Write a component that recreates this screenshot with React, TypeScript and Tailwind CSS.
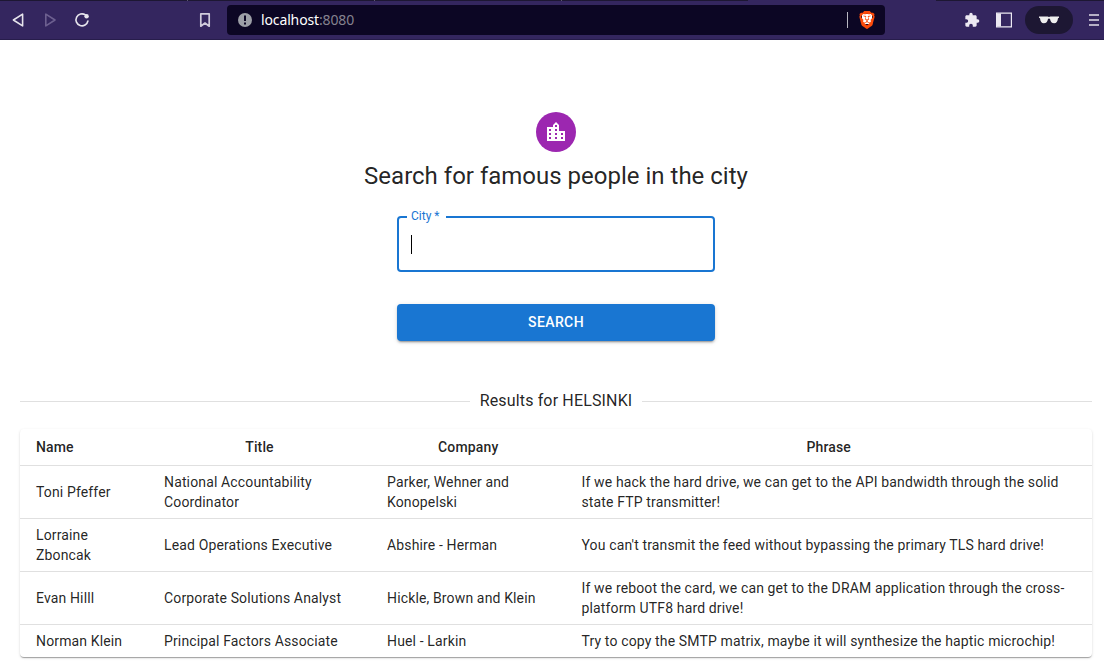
import React from 'react';
import { MdExtension, MdLocationCity } from 'react-icons/md';
import { SiBrave } from 'react-icons/si';

const people = [
  {
    name: 'Toni Pfeffer',
    title: 'National Accountability Coordinator',
    company: 'Parker, Wehner and Konopelski',
    phrase:
      'If we hack the hard drive, we can get to the API bandwidth through the solid state FTP transmitter!',
  },
  {
    name: 'Lorraine Zboncak',
    title: 'Lead Operations Executive',
    company: 'Abshire - Herman',
    phrase: "You can't transmit the feed without bypassing the primary TLS hard drive!",
  },
  {
    name: 'Evan Hilll',
    title: 'Corporate Solutions Analyst',
    company: 'Hickle, Brown and Klein',
    phrase:
      'If we reboot the card, we can get to the DRAM application through the cross-platform UTF8 hard drive!',
  },
  {
    name: 'Norman Klein',
    title: 'Principal Factors Associate',
    company: 'Huel - Larkin',
    phrase: 'Try to copy the SMTP matrix, maybe it will synthesize the haptic microchip!',
  },
];

function BrowserBar() {
  return (
    <header className="flex h-10 w-full shrink-0 flex-col overflow-hidden border-b border-[#271d4b] bg-[#34265f]">
      <div className="flex h-px w-full shrink-0 justify-between">
        <div className="flex h-px w-[748px] bg-[#1d1733]">
          <span className="ml-[187px] h-px w-px bg-[#5b5670]" />
          <span className="ml-[186px] h-px w-px bg-[#5b5670]" />
          <span className="ml-[186px] h-px w-px bg-[#5b5670]" />
        </div>
        <div className="h-px w-[168px] bg-[#1d1733]" />
      </div>
      <div className="flex flex-1 items-center">
        <svg className="ml-2.5 shrink-0" width="16" height="16" viewBox="0 0 16 16" fill="none" stroke="#e6e4ec" strokeWidth="1.6" strokeLinejoin="round">
          <path d="M12.6 2.1v11.8L3.4 8z" />
        </svg>
        <svg className="ml-4 shrink-0" width="16" height="16" viewBox="0 0 16 16" fill="none" stroke="#6d6090" strokeWidth="1.6" strokeLinejoin="round">
          <path d="M3.8 2.1v11.8L13 8z" />
        </svg>
        <svg className="ml-4 shrink-0" width="16" height="16" viewBox="0 0 16 16" fill="none" stroke="#e6e4ec" strokeWidth="1.6" strokeLinecap="round">
          <path d="M11.4 2.900A6 6 0 1 0 13.900 9" />
          <circle cx="12.6" cy="4.200" r="2.200" fill="#e6e4ec" stroke="none" />
        </svg>
        <svg className="ml-[107px] shrink-0" width="16" height="16" viewBox="0 0 16 16" fill="none" stroke="#d0ccdc" strokeWidth="1.7" strokeLinejoin="round">
          <path d="M3.8 1.800h8.400v12.400L8 11l-4.200 3.200z" />
        </svg>
        <div className="ml-[14px] flex h-[30px] w-[658px] shrink-0 items-center rounded bg-[#0c0624] pl-[11px]">
          <svg className="shrink-0" width="14" height="14" viewBox="0 0 14 14">
            <circle cx="7" cy="7" r="7" fill="#9d9fa7" />
            <path d="M6 2.500h2v5.500H6zM6 9.500h2v2H6z" fill="#0c0624" />
          </svg>
          <span className="ml-[9px] font-['Noto_Sans'] text-[14px] leading-5 tracking-[-0.13px] text-white">
            localhost<span className="text-[#85828f]">:8080</span>
          </span>
          <span className="ml-auto h-4 w-px bg-[#b9b7c2]" />
          <span className="relative mr-[9px] ml-[10px] flex h-[18px] w-[18px] items-center justify-center">
            <span className="absolute top-[3px] left-[4px] h-[10px] w-[10px] bg-white" />
            <SiBrave className="relative text-[#fb4a0a]" size={18} />
          </span>
        </div>
        <MdExtension className="ml-[79px] shrink-0 text-[#ece9f2]" size={16} />
        <svg className="ml-4 shrink-0" width="16" height="16" viewBox="0 0 16 16">
          <path d="M.6 1.100h14.800v13.800H.6z" fill="none" stroke="#ece9f2" strokeWidth="1.200" />
          <path d="M1 1.500h4v13H1z" fill="#ece9f2" />
        </svg>
        <div className="ml-[13px] flex h-7 w-12 shrink-0 items-center justify-center rounded-full bg-[#1d1733]">
          <svg width="20" height="8" viewBox="0 0 20 8" fill="#efefef">
            <path d="M0 .5h8.600l1.400.6 1.400-.6H20v1.200l-1 .5c-.4 3.300-1.600 5-3.800 5-2.400 0-3.700-1.600-4.200-4.300-.4-.7-1.600-.7-2 0-.5 2.700-1.800 4.300-4.200 4.300-2.200 0-3.400-1.700-3.800-5L0 1.700z" />
          </svg>
        </div>
        <div className="ml-4 flex shrink-0 flex-col gap-[3px]">
          <span className="h-0.5 w-[10px] bg-[#b6b0c6]" />
          <span className="h-0.5 w-[10px] bg-[#b6b0c6]" />
          <span className="h-0.5 w-[10px] bg-[#b6b0c6]" />
        </div>
      </div>
    </header>
  );
}

function SearchForm() {
  return (
    <form className="flex w-full flex-col items-center" onSubmit={(e) => e.preventDefault()}>
      <div className="flex h-10 w-10 items-center justify-center rounded-full bg-[#9c27b0] text-white">
        <MdLocationCity size={24} />
      </div>
      <h1 className="mt-2 text-2xl leading-8">Search for famous people in the city</h1>
      <div className="relative mt-6 flex h-14 w-[318px] items-center rounded border-2 border-[#1976d2] pl-3">
        <label className="absolute -top-[10px] left-2 h-4 w-[39px] bg-white pl-1 text-xs leading-4 whitespace-nowrap text-[#1976d2]">
          City *
        </label>
        <span className="h-[19px] w-px bg-black" />
      </div>
      <button className="mt-8 h-[37px] w-[318px] rounded bg-[#1976d2] pb-0.5 text-sm font-medium tracking-[0.4px] text-white shadow-[0_3px_1px_-2px_rgba(0,0,0,0.2),0_2px_2px_0_rgba(0,0,0,0.14),0_1px_5px_0_rgba(0,0,0,0.12)]">
        SEARCH
      </button>
    </form>
  );
}

function ResultsTable() {
  return (
    <div className="mt-4 w-full rounded bg-white shadow-[0_2px_1px_-1px_rgba(0,0,0,0.2),0_1px_1px_0_rgba(0,0,0,0.14),0_1px_3px_0_rgba(0,0,0,0.12)]">
      <table className="w-full table-fixed border-separate border-spacing-0 text-sm tracking-[0.14px]">
        <colgroup>
          <col className="w-[128px]" />
          <col className="w-[223px]" />
          <col className="w-[194.5px]" />
          <col />
        </colgroup>
        <thead>
          <tr className="leading-6">
            <th className="border-b border-[#e0e0e0] px-4 py-1.5 text-left font-medium">Name</th>
            <th className="border-b border-[#e0e0e0] px-4 py-1.5 text-center font-medium">Title</th>
            <th className="border-b border-[#e0e0e0] px-4 py-1.5 text-center font-medium">Company</th>
            <th className="border-b border-[#e0e0e0] px-4 py-1.5 text-center font-medium">Phrase</th>
          </tr>
        </thead>
        <tbody>
          {people.map((p) => (
            <tr key={p.name} className="leading-5 *:border-b *:border-[#e0e0e0] *:px-4 *:py-1.5 last:*:border-b-0">
              <td>{p.name}</td>
              <td>{p.title}</td>
              <td>{p.company}</td>
              <td>{p.phrase}</td>
            </tr>
          ))}
        </tbody>
      </table>
    </div>
  );
}

export default function App() {
  return (
    <div className="flex h-[663px] w-[1104px] flex-col overflow-hidden bg-white font-['Roboto',sans-serif] text-[rgba(0,0,0,0.87)]">
      <BrowserBar />
      <main className="flex flex-col pt-[72px] pr-3 pl-5">
        <SearchForm />
        <div className="mt-12 flex items-center">
          <span className="mt-px h-px flex-1 bg-[#e0e0e0]" />
          <span className="px-[9.6px] text-base leading-6 tracking-[0.15px]">Results for HELSINKI</span>
          <span className="mt-px h-px flex-1 bg-[#e0e0e0]" />
        </div>
        <ResultsTable />
      </main>
    </div>
  );
}
